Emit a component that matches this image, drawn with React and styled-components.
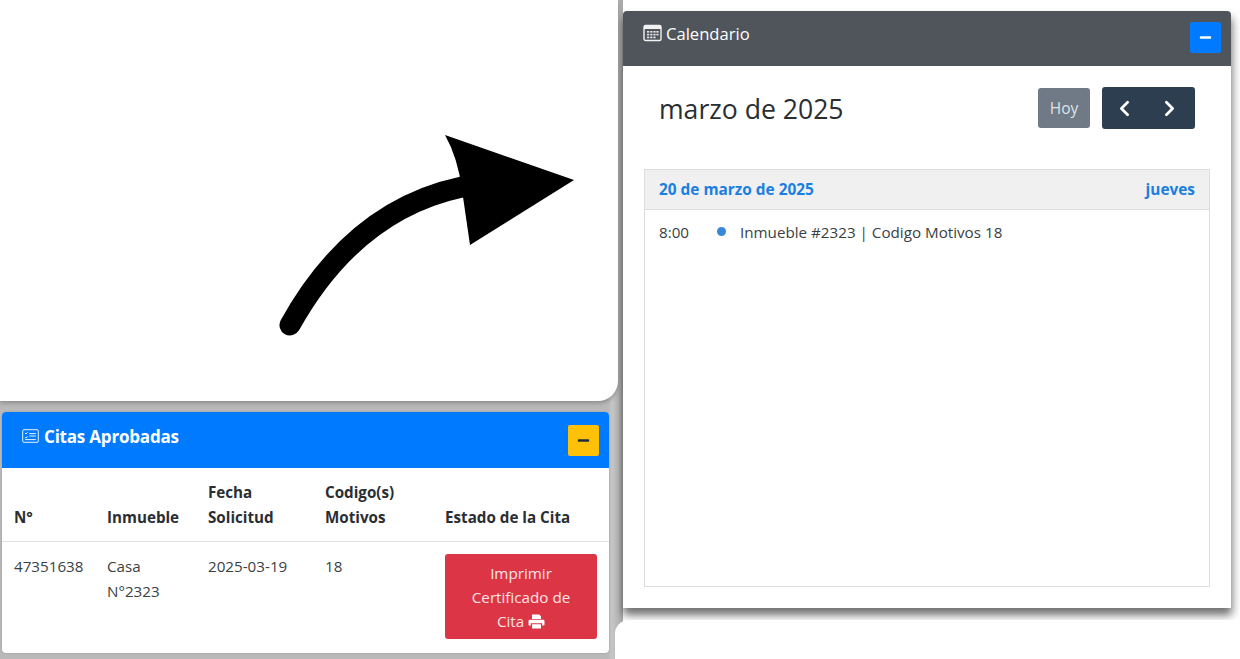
import React from "react";
import styled, { createGlobalStyle } from "styled-components";
import { FaMinus } from "react-icons/fa";
import { ChevronLeft, ChevronRight } from "lucide-react";

const Global = createGlobalStyle`
  html, body { margin: 0; padding: 0; background: #fff; }
  body { font-family: "Open Sans", "Noto Sans", sans-serif; color: #212529; }
`;

const Page = styled.div`
  width: 1240px;
  height: 659px;
  display: grid;
  grid-template-columns: 623px 617px;
  background: #fff;
  overflow: hidden;
`;

const LeftColumn = styled.div`
  display: flex;
  flex-direction: column;
  background: linear-gradient(90deg, #b9b9b9 0, #b9b9b9 608px, #c6c6c6 612px, #b8b8b8 618px, #a6a6a6 623px);
`;

const ArrowPanel = styled.div`
  position: relative;
  z-index: 2;
  width: 618px;
  height: 401px;
  box-sizing: border-box;
  padding: 120px 0 0 260px;
  background: #fff;
  border-bottom-right-radius: 20px;
  box-shadow: 0 2px 4px rgba(0, 0, 0, 0.25);
`;

const ArrowSvg = styled.svg`
  display: block;
`;

const Card = styled.section`
  position: relative;
  background: #fff;
  border-radius: 4px;
  overflow: hidden;
`;

const ApprovedCard = styled(Card)`
  z-index: 3;
  margin: 11px 0 0 2px;
  width: 607px;
  height: 241px;
  box-shadow: 0 0 2px rgba(0, 0, 0, 0.2);
`;

const Header = styled.header`
  display: flex;
  justify-content: space-between;
  box-sizing: border-box;
  height: ${(p) => p.$height}px;
  padding: ${(p) => p.$top}px 10px 0 20px;
  background: ${(p) => p.$bg};
  color: #fff;
`;

const Title = styled.h3`
  display: flex;
  align-items: center;
  gap: ${(p) => p.$gap}px;
  margin: ${(p) => p.$top}px 0 0;
  height: 24px;
  font-size: ${(p) => p.$size}px;
  font-weight: ${(p) => p.$weight};
  letter-spacing: ${(p) => p.$spacing}px;
`;

const CollapseButton = styled.button`
  display: flex;
  align-items: center;
  justify-content: center;
  width: 31px;
  height: 31px;
  padding: 0;
  border: 0;
  border-radius: 2px;
  background: ${(p) => p.$bg};
  color: ${(p) => p.$fg};
  font-size: 13px;
`;

const Table = styled.table`
  width: 100%;
  table-layout: fixed;
  border-collapse: collapse;
  font-size: 15.2px;
  line-height: 24.5px;
`;

const Col = styled.col`
  width: ${(p) => p.$w}px;
`;

const Th = styled.th`
  padding: 12px;
  text-align: left;
  vertical-align: bottom;
  font-weight: 700;
  color: #2a2e33;
  border-bottom: 1px solid #dee2e6;
`;

const Td = styled.td`
  padding: 12px;
  vertical-align: top;
  color: #3a3f44;
`;

const PrintButton = styled.button`
  display: block;
  width: 152px;
  box-sizing: border-box;
  padding: 7px 20px 6px;
  border: 0;
  border-radius: 3px;
  background: #dc3545;
  color: #fbe4e6;
  font: inherit;
  line-height: 24px;
  text-align: center;
`;

const PrinterGlyph = styled.svg`
  vertical-align: -2px;
`;

const RightColumn = styled.div`
  display: flex;
  flex-direction: column;
`;

const CalendarCard = styled(Card)`
  margin: 11px 0 0 0;
  width: 608px;
  height: 597px;
  flex: none;
  border-radius: 4px 4px 0 0;
  box-shadow: 0 7px 9px rgba(0, 0, 0, 0.5), 4px 6px 10px rgba(0, 0, 0, 0.12);
`;

const BottomPanel = styled.div`
  position: relative;
  z-index: 2;
  flex: 1;
  margin: 12px 0 0 -8px;
  background: #fff;
  border-top-left-radius: 14px;
`;

const CalendarBody = styled.div`
  padding: 21px 21px 0 21px;
`;

const Toolbar = styled.div`
  display: flex;
  align-items: center;
  height: 42px;
  padding: 0 15px;
  margin-bottom: 40px;
`;

const Month = styled.h2`
  flex: 1;
  margin: 2px 0 0;
  font-size: 26.6px;
  font-weight: 400;
  color: #2a2e33;
`;

const TodayButton = styled.button`
  width: 52px;
  height: 40px;
  padding: 0;
  margin-right: 12px;
  border: 0;
  border-radius: 3px;
  background: #6f7a86;
  color: #dfe3e6;
  font: inherit;
  font-size: 15.5px;
`;

const NavGroup = styled.div`
  display: flex;
  width: 93px;
  height: 42px;
  box-sizing: border-box;
  padding-right: 3px;
  border-radius: 3px;
  background: #2c3e50;
`;

const NavButton = styled.button`
  flex: 1;
  display: flex;
  align-items: center;
  justify-content: center;
  padding: 0;
  border: 0;
  background: transparent;
  color: #fff;
`;

const ListView = styled.div`
  height: 418px;
  box-sizing: border-box;
  border: 1px solid #ddd;
`;

const DayHeader = styled.div`
  display: flex;
  justify-content: space-between;
  align-items: center;
  height: 40px;
  box-sizing: border-box;
  padding: 0 14px;
  background: #f0f0f0;
  border-bottom: 1px solid #ddd;
  color: #1a7fe0;
  font-size: 15.4px;
  font-weight: 700;
`;

const EventRow = styled.div`
  display: flex;
  align-items: center;
  height: 43px;
  padding-left: 14px;
  font-size: 15.2px;
  color: #3a3f44;
`;

const EventTime = styled.span`
  width: 58px;
`;

const EventDot = styled.span`
  width: 9px;
  height: 9px;
  margin-right: 14px;
  border-radius: 50%;
  background: #3788d8;
`;

const CalendarIcon = () => (
  <svg width="19" height="18" viewBox="0 0 19 18" fill="none">
    <rect x="1" y="1.5" width="17" height="15" rx="1.5" stroke="#f2f2f2" strokeWidth="1.4" />
    <rect x="1" y="1.5" width="17" height="3.5" fill="#f2f2f2" />
    <g fill="#e8e8e8">
      <rect x="4" y="7" width="2.2" height="1.6" /><rect x="7.2" y="7" width="2.2" height="1.6" />
      <rect x="10.4" y="7" width="2.2" height="1.6" /><rect x="13.4" y="7" width="2.2" height="1.6" />
      <rect x="4" y="9.8" width="2.2" height="1.6" /><rect x="7.2" y="9.8" width="2.2" height="1.6" />
      <rect x="10.4" y="9.8" width="2.2" height="1.6" /><rect x="13.4" y="9.8" width="2.2" height="1.6" />
      <rect x="4" y="12.6" width="2.2" height="1.6" /><rect x="7.2" y="12.6" width="2.2" height="1.6" />
      <rect x="10.4" y="12.6" width="2.2" height="1.6" />
    </g>
  </svg>
);

const ListIcon = () => (
  <svg width="17" height="14" viewBox="0 0 17 14" fill="none" stroke="#e6f1ff" strokeWidth="1">
    <rect x="0.7" y="0.7" width="15.6" height="12.6" rx="1.2" />
    <path d="M3 4l1 1 1.6-1.8M3 8.2l1 1 1.6-1.8" />
    <path d="M7.2 4.6h6.6M7.2 7h6.6M3 10.6h10.8" />
  </svg>
);

const PrinterIcon = () => (
  <PrinterGlyph width="17" height="15" viewBox="0 0 17 15" fill="#fff">
    <path d="M4 0.5h7.2L13 2.2V5H4z" />
    <path d="M1.8 5.8h13.4c.7 0 1.3.6 1.3 1.3v3.7c0 .4-.3.7-.7.7h-1.6V9.2H2.8v2.3H1.2c-.4 0-.7-.3-.7-.7V7.1c0-.7.6-1.3 1.3-1.3z" />
    <rect x="4" y="10.2" width="9" height="4.3" rx="0.5" />
  </PrinterGlyph>
);

const Arrow = () => (
  <ArrowSvg width="330" height="230" viewBox="260 120 330 230">
    <path d="M290 325 Q354 210 462 187" fill="none" stroke="#000" strokeWidth="21" strokeLinecap="round" />
    <path d="M445 135 L574 180 L470 245 L462 190 Q458 158 445 135 Z" fill="#000" />
  </ArrowSvg>
);

export default function App() {
  return (
    <>
      <Global />
      <Page>
        <LeftColumn>
          <ArrowPanel>
            <Arrow />
          </ArrowPanel>
          <ApprovedCard>
            <Header $height={56} $top={13} $bg="#007bff">
              <Title $top={-1} $gap={5} $size={17} $weight={700} $spacing={-0.2}>
                <ListIcon />
                Citas Aprobadas
              </Title>
              <CollapseButton $bg="#ffc107" $fg="#1f2d3d" aria-label="Minimizar">
                <FaMinus />
              </CollapseButton>
            </Header>
            <Table>
              <colgroup>
                <Col $w={93} />
                <Col $w={101} />
                <Col $w={117} />
                <Col $w={120} />
                <Col $w={176} />
              </colgroup>
              <thead>
                <tr>
                  <Th>N°</Th>
                  <Th>Inmueble</Th>
                  <Th>Fecha Solicitud</Th>
                  <Th>Codigo(s) Motivos</Th>
                  <Th>Estado de la Cita</Th>
                </tr>
              </thead>
              <tbody>
                <tr>
                  <Td>47351638</Td>
                  <Td>Casa N°2323</Td>
                  <Td>2025-03-19</Td>
                  <Td>18</Td>
                  <Td>
                    <PrintButton>
                      Imprimir Certificado de Cita <PrinterIcon />
                    </PrintButton>
                  </Td>
                </tr>
              </tbody>
            </Table>
          </ApprovedCard>
        </LeftColumn>
        <RightColumn>
          <CalendarCard>
            <Header $height={55} $top={11} $bg="#50555c">
              <Title $top={-1} $gap={4} $size={16.6} $weight={400} $spacing={0}>
                <CalendarIcon />
                Calendario
              </Title>
              <CollapseButton $bg="#007bff" $fg="#fff" aria-label="Minimizar">
                <FaMinus />
              </CollapseButton>
            </Header>
            <CalendarBody>
              <Toolbar>
                <Month>marzo de 2025</Month>
                <TodayButton>Hoy</TodayButton>
                <NavGroup>
                  <NavButton aria-label="Anterior">
                    <ChevronLeft size={25} strokeWidth={2.6} />
                  </NavButton>
                  <NavButton aria-label="Siguiente">
                    <ChevronRight size={25} strokeWidth={2.6} />
                  </NavButton>
                </NavGroup>
              </Toolbar>
              <ListView>
                <DayHeader>
                  <span>20 de marzo de 2025</span>
                  <span>jueves</span>
                </DayHeader>
                <EventRow>
                  <EventTime>8:00</EventTime>
                  <EventDot />
                  <span>Inmueble #2323 | Codigo Motivos 18</span>
                </EventRow>
              </ListView>
            </CalendarBody>
          </CalendarCard>
          <BottomPanel />
        </RightColumn>
      </Page>
    </>
  );
}
